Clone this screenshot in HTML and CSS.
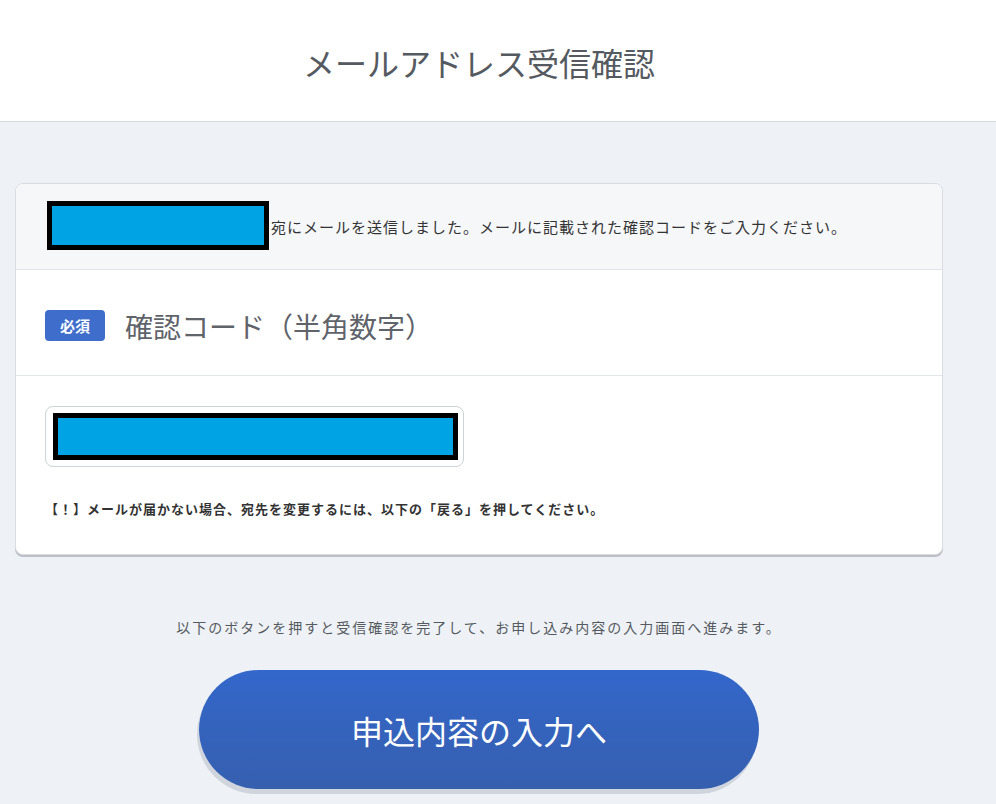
FILE: index.html
```html
<!DOCTYPE html>
<html lang="ja">
<head>
<meta charset="utf-8">
<title>メールアドレス受信確認</title>
<link rel="stylesheet" href="styles.css">
</head>
<body>
<header class="header">
  <div class="header-inner">
    <h1 class="title">メールアドレス受信確認</h1>
  </div>
</header>
<div class="page">
  <main class="main">
    <section class="card">
      <div class="card-notice">
        <span class="redact redact-mail"></span><span class="notice-text">宛にメールを送信しました。メールに記載された確認コードをご入力ください。</span>
      </div>
      <div class="card-label">
        <span class="badge">必須</span>
        <span class="label-text">確認コード（半角数字）</span>
      </div>
      <div class="card-body">
        <div class="input-box"><span class="redact redact-input"></span></div>
        <p class="warning">【！】メールが届かない場合、宛先を変更するには、以下の「戻る」を押してください。</p>
      </div>
    </section>
    <p class="lead">以下のボタンを押すと受信確認を完了して、お申し込み内容の入力画面へ進みます。</p>
    <div class="actions">
      <button class="btn-primary" type="button">申込内容の入力へ</button>
    </div>
  </main>
</div>
</body>
</html>
```

FILE: styles.css
```css
* { box-sizing: border-box; }
html, body { margin: 0; padding: 0; }
body {
  background: #eef2f6;
  font-family: "Noto Sans CJK JP", "Noto Sans", sans-serif;
  color: #333;
}
.page {
  width: 958px;
}
.header {
  background: #fff;
  height: 122px;
  border-bottom: 1px solid #d6dade;
}
.header-inner {
  width: 958px;
  height: 100%;
  display: flex;
  align-items: center;
  justify-content: center;
}
.title {
  margin: 0;
  padding-top: 2px;
  font-size: 32px;
  font-weight: 400;
  letter-spacing: 0;
  color: #555a61;
}
.main {
  padding-top: 61px;
}
.card {
  margin: 0 15px;
  background: #fff;
  border: 1px solid #d9dde2;
  border-radius: 8px;
  box-shadow: 0 2px 0 #bcc0c6;
  overflow: hidden;
}
.card-notice {
  background: #f6f7f9;
  height: 86px;
  border-bottom: 1px solid #e2e5e9;
  padding: 17px 0 0 31px;
  display: flex;
  align-items: flex-start;
}
.redact {
  display: block;
  background: #00a3e4;
  border: 5px solid #000;
  flex: none;
}
.redact-mail {
  width: 222px;
  height: 49px;
}
.notice-text {
  font-size: 15px;
  letter-spacing: 1px;
  color: #333;
  line-height: 20px;
  margin-top: 16px;
  margin-left: 2px;
}
.card-label {
  height: 106px;
  border-bottom: 1px solid #e2e5e9;
  display: flex;
  align-items: center;
  padding: 6px 0 0 29px;
}
.badge {
  width: 60px;
  height: 31px;
  background: #3e6dcb;
  color: #fff;
  border-radius: 4px;
  font-size: 15px;
  font-weight: 700;
  display: flex;
  align-items: center;
  justify-content: center;
}
.label-text {
  margin-left: 20px;
  font-size: 28px;
  color: #5f636a;
  line-height: 1;
}
.card-body {
  padding: 30px 0 35px 29px;
}
.input-box {
  width: 419px;
  height: 61px;
  border: 1px solid #cfd2d6;
  border-radius: 8px;
  padding: 6px 0 0 7px;
}
.redact-input {
  width: 405px;
  height: 47px;
}
.warning {
  margin: 32px 0 0;
  font-size: 13px;
  font-weight: 700;
  letter-spacing: 1px;
  line-height: 20px;
  color: #333;
}
.lead {
  margin: 62px 0 0;
  text-align: center;
  font-size: 14px;
  letter-spacing: 2px;
  color: #555a61;
  line-height: 20px;
}
.actions {
  display: flex;
  justify-content: center;
  padding-top: 33px;
  padding-bottom: 20px;
}
.btn-primary {
  width: 560px;
  height: 119px;
  border: none;
  border-radius: 60px;
  background: linear-gradient(#3367cb, #365fae);
  color: #fff;
  font-family: "Noto Sans CJK JP", "Noto Sans", sans-serif;
  font-size: 32px;
  font-weight: 400;
  box-shadow: -2px 5px 0 #d0d5dd;
  cursor: pointer;
}
```
